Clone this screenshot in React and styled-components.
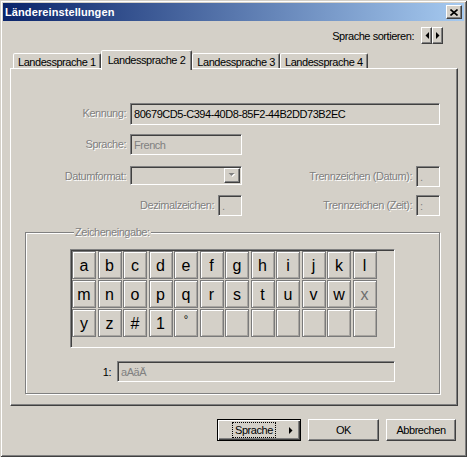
import styled, { createGlobalStyle } from 'styled-components';

const GlobalStyle = createGlobalStyle`
  html, body { margin: 0; padding: 0; background: #d4d0c8; }
  body {
    font-family: "Liberation Sans", Arial, sans-serif;
    font-size: 11px;
    letter-spacing: -0.45px;
    color: #000;
  }
  * { box-sizing: border-box; }
`;

const keyRows = [
  ['a', 'b', 'c', 'd', 'e', 'f', 'g', 'h', 'i', 'j', 'k', 'l'],
  ['m', 'n', 'o', 'p', 'q', 'r', 's', 't', 'u', 'v', 'w', 'x'],
  ['y', 'z', '#', '1', '°', '', '', '', '', '', '', ''],
];

const tabs = ['Landessprache 1', 'Landessprache 2', 'Landessprache 3', 'Landessprache 4'];

const Triangle = ({ dir = 'right', color = '#000' }) => {
  const paths = {
    left: 'M4 0 L4 7 L0.5 3.5 Z',
    right: 'M0 0 L0 7 L3.5 3.5 Z',
  };
  return (
    <svg width="4" height="7" viewBox="0 0 4 7">
      <path d={paths[dir]} fill={color} />
    </svg>
  );
};

const DownArrow = () => (
  <svg width="8" height="5" viewBox="0 0 8 5">
    <path d="M1.5 1 L7.5 1 L4.5 4 Z" fill="#fff" />
    <path d="M0.5 0 L6.5 0 L3.5 3 Z" fill="#808080" />
  </svg>
);

const App = () => {
  return (
    <>
      <GlobalStyle />
      <Window>
        <TitleBar>
          <span>Ländereinstellungen</span>
          <CloseButton>
            <svg width="8" height="7" viewBox="0 0 8 7">
              <path d="M0.5 0.5 L7.5 6.5 M7.5 0.5 L0.5 6.5" stroke="#000" strokeWidth="1.6" />
            </svg>
          </CloseButton>
        </TitleBar>

        <SortRow>
          <span>Sprache sortieren:</span>
          <ArrowPair>
            <ArrowButton><Triangle dir="left" /></ArrowButton>
            <ArrowButton><Triangle dir="right" /></ArrowButton>
          </ArrowPair>
        </SortRow>

        <TabStrip>
          {tabs.map((t, i) => (
            <Tab key={t} $active={i === 1}>{t}</Tab>
          ))}
        </TabStrip>

        <Panel>
          <FormGrid>
            <Label>Kennung:</Label>
            <Field $wide $h={22}>80679CD5-C394-40D8-85F2-44B2DD73B2EC</Field>

            <Label>Sprache:</Label>
            <Field $muted>French</Field>
            <Spacer />

            <Label>Datumformat:</Label>
            <Combo>
              <ComboButton><DownArrow /></ComboButton>
            </Combo>
            <Label>Trennzeichen (Datum):</Label>
            <Field $muted $small>.</Field>

            <PairCell>
              <Label>Dezimalzeichen:</Label>
              <Field $muted $small>.</Field>
            </PairCell>
            <Label>Trennzeichen (Zeit):</Label>
            <Field $muted $small>:</Field>
          </FormGrid>

          <GroupBox>
            <Legend>Zeicheneingabe:</Legend>
            <KeyFrame>
              <KeyGrid>
                {keyRows.flat().map((k, i) => (
                  <Key key={i} $dim={k === 'x'} $small={k === '°'}>{k}</Key>
                ))}
              </KeyGrid>
            </KeyFrame>
            <LetterRow>
              <span>1:</span>
              <Field $muted>aAäÄ</Field>
            </LetterRow>
          </GroupBox>
        </Panel>

        <Footer>
          <Button $default>
            <FocusText>Sprache</FocusText>
            <Triangle dir="right" />
          </Button>
          <Button $w={71}>OK</Button>
          <Button $w={70}>Abbrechen</Button>
        </Footer>
      </Window>
    </>
  );
};

export default App;

const raised = `
  border: 1px solid;
  border-color: #fff #404040 #404040 #fff;
  box-shadow: inset -1px -1px #808080;
`;

const sunken = `
  border: 1px solid;
  border-color: #808080 #fff #fff #808080;
  box-shadow: inset 1px 1px #404040, inset -1px -1px #d4d0c8;
`;

const Window = styled.div`
  width: 467px;
  height: 457px;
  padding: 3px;
  display: flex;
  flex-direction: column;
  background: #d4d0c8;
  box-shadow: inset 1px 1px #d4d0c8, inset -1px -1px #404040, inset 2px 2px #fff, inset -2px -2px #808080;
`;

const TitleBar = styled.div`
  height: 18px;
  display: flex;
  align-items: center;
  justify-content: space-between;
  padding: 0 2px 0 2px;
  background: linear-gradient(to right, #0a246a, #a6caf0);
  color: #fff;
  font-weight: bold;
  letter-spacing: 0.1px;
`;

const CloseButton = styled.div`
  width: 16px;
  height: 14px;
  background: #d4d0c8;
  display: flex;
  align-items: center;
  justify-content: center;
  ${raised}
`;

const SortRow = styled.div`
  display: flex;
  justify-content: flex-end;
  align-items: center;
  gap: 7px;
  height: 17px;
  margin-top: 6px;
  padding-right: 21px;
`;

const ArrowPair = styled.div`
  display: flex;
`;

const ArrowButton = styled.div`
  width: 11px;
  height: 17px;
  display: flex;
  align-items: center;
  justify-content: center;
  ${raised}
`;

const TabStrip = styled.div`
  display: flex;
  align-items: flex-end;
  height: 18px;
  margin: 6px 0 0 10px;
  position: relative;
  z-index: 1;
`;

const Tab = styled.div`
  height: ${p => (p.$active ? 20 : 15)}px;
  margin-bottom: ${p => (p.$active ? -2 : 0)}px;
  padding: ${p => (p.$active ? '0 6px 2px' : '1px 4px 0')};
  display: flex;
  align-items: center;
  background: #d4d0c8;
  border: 1px solid;
  border-bottom: none;
  border-color: #fff #404040 transparent #fff;
  border-radius: 2px 2px 0 0;
  box-shadow: inset -1px 0 #808080;
  white-space: nowrap;
`;

const Panel = styled.div`
  margin: 0 6px 0 7px;
  height: 338px;
  padding: 34px 17px 0 14px;
  ${raised}
`;

const FormGrid = styled.div`
  display: grid;
  grid-template-columns: 101px 112px 166px 24px;
  grid-template-rows: 31px 32px 29px 21px;
  column-gap: 4px;
  align-items: start;
`;

const Spacer = styled.span`
  grid-column: 3 / 5;
`;

const Label = styled.span`
  height: 21px;
  line-height: 21px;
  text-align: right;
  white-space: nowrap;
  color: #808080;
  text-shadow: 1px 1px 0 #fff;
`;

const Field = styled.div`
  height: ${p => p.$h || 21}px;
  grid-column: ${p => (p.$wide ? '2 / 5' : 'auto')};
  width: ${p => (p.$small ? '24px' : 'auto')};
  flex: ${p => (p.$small ? 'none' : '1')};
  display: flex;
  align-items: center;
  padding: 0 3px;
  background: #d4d0c8;
  color: ${p => (p.$muted ? '#808080' : '#000')};
  white-space: nowrap;
  ${sunken}
`;

const Combo = styled.div`
  height: 19px;
  display: flex;
  justify-content: flex-end;
  align-items: center;
  padding-right: 1px;
  ${sunken}
`;

const ComboButton = styled.div`
  width: 16px;
  height: 15px;
  display: flex;
  align-items: center;
  justify-content: center;
  background: #d4d0c8;
  ${raised}
`;

const PairCell = styled.div`
  grid-column: 1 / 3;
  display: flex;
  justify-content: flex-end;
  gap: 4px;
`;

const GroupBox = styled.fieldset`
  margin: 10px 0 0;
  min-width: 0;
  padding: 10px 0 11px 44px;
  border: 1px solid #808080;
  box-shadow: 1px 1px 0 #fff, inset 1px 1px 0 #fff;
`;

const Legend = styled.legend`
  margin-left: 4px;
  padding: 0 1px;
  line-height: 13px;
  background: #d4d0c8;
  color: #808080;
  text-shadow: 1px 1px 0 #fff;
`;

const KeyFrame = styled.div`
  width: 325px;
  height: 99px;
  padding: 1px;
  ${sunken}
`;

const KeyGrid = styled.div`
  display: grid;
  grid-template-columns: repeat(12, 24px);
  grid-auto-rows: 28px;
  column-gap: 1.5px;
  row-gap: 1px;
`;

const Key = styled.div`
  display: flex;
  align-items: ${p => (p.$small ? 'flex-start' : 'center')};
  justify-content: center;
  padding-top: ${p => (p.$small ? '3px' : '1px')};
  border: 1px solid #7a7a7a;
  box-shadow: inset 1px 1px #fff, inset -1px -1px #a8a5a0;
  font-size: ${p => (p.$small ? '11px' : '16px')};
  letter-spacing: 0;
  color: ${p => (p.$dim ? '#6e6e6e' : '#000')};
  font-weight: ${p => (p.$dim ? 300 : 400)};
`;

const LetterRow = styled.div`
  width: 325px;
  margin-top: 13px;
  display: flex;
  align-items: center;
  justify-content: flex-end;
  gap: 6px;

  & > div {
    flex: none;
    width: 278px;
  }
`;

const Footer = styled.div`
  display: flex;
  justify-content: flex-end;
  gap: 7px;
  margin-top: 13px;
  padding-right: 8px;
`;

const Button = styled.div`
  width: ${p => p.$w || 84}px;
  height: 22px;
  display: flex;
  align-items: center;
  justify-content: ${p => (p.$default ? 'space-between' : 'center')};
  padding: ${p => (p.$default ? '0 7px 0 16px' : '0')};
  background: #d4d0c8;
  border: 1px solid;
  border-color: ${p => (p.$default ? '#000' : '#fff #404040 #404040 #fff')};
  box-shadow: ${p =>
    p.$default
      ? 'inset 1px 1px #fff, inset -1px -1px #404040, inset -2px -2px #808080'
      : 'inset -1px -1px #808080'};
`;

const FocusText = styled.span`
  outline: 1px dotted #000;
  outline-offset: 1px;
  padding: 0 1px;
`;
